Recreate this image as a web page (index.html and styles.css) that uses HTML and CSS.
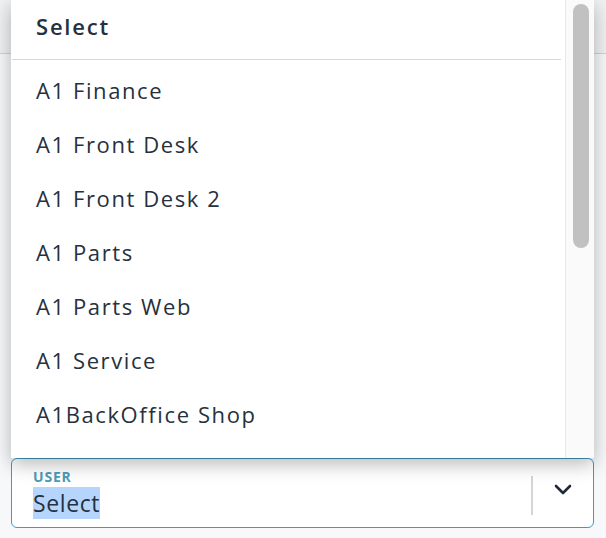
FILE: index.html
```html
<!DOCTYPE html>
<html lang="en">
<head>
  <meta charset="UTF-8" />
  <meta name="viewport" content="width=device-width, initial-scale=1" />
  <title>User Select</title>
  <link rel="stylesheet" href="styles.css">
</head>
<body>

  <div class="page">
    <div class="topbar"></div>

    <div class="field">
      <div class="field-text">
        <span class="field-label">USER</span>
        <span class="field-value"><span class="highlight">Select</span></span>
      </div>
      <div class="field-divider"></div>
      <div class="field-arrow">
        <svg width="18" height="12" viewBox="0 0 18 12">
          <path d="M2 3 L9 10 L16 3" fill="none" stroke="#1f2a36" stroke-width="2.6" stroke-linecap="round" stroke-linejoin="round"/>
        </svg>
      </div>
    </div>

    <div class="menu">
      <div class="menu-list">
        <div class="menu-header">Select</div>
        <div class="menu-items">
          <div class="menu-item">A1 Finance</div>
          <div class="menu-item">A1 Front Desk</div>
          <div class="menu-item">A1 Front Desk 2</div>
          <div class="menu-item">A1 Parts</div>
          <div class="menu-item">A1 Parts Web</div>
          <div class="menu-item">A1 Service</div>
          <div class="menu-item">A1BackOffice Shop</div>
        </div>
      </div>
      <div class="menu-scroll">
        <div class="menu-thumb"></div>
      </div>
    </div>
  </div>

</body>
</html>
```

FILE: styles.css
```css
* {
  margin: 0;
  padding: 0;
  box-sizing: border-box;
}

body {
  font-family: 'Open Sans', 'Lato', sans-serif;
  background: #f6f8fa;
  color: #26313d;
  height: 538px;
  overflow: hidden;
}

.page {
  position: relative;
  height: 538px;
}

.topbar {
  height: 54px;
  background: #f0f1f2;
  border-bottom: 1px solid #cfd2d5;
}

/* select field */
.field {
  margin: 404px 12px 0 11px;
  height: 70px;
  background: #fff;
  border: 1px solid #3f9cbf;
  border-radius: 6px;
  display: flex;
  align-items: center;
}

.field-text {
  flex: 1;
  display: flex;
  flex-direction: column;
  padding-left: 21px;
}

.field-label {
  font-size: 14px;
  font-weight: 700;
  color: #4b9bb7;
  letter-spacing: 0.8px;
  line-height: 14px;
}

.field-value {
  font-size: 23px;
  line-height: 28px;
  margin-top: 5px;
  letter-spacing: 0.6px;
}

.highlight {
  background: #b5d5fd;
}

.field-divider {
  width: 2px;
  height: 39px;
  background: #d3d5d7;
  margin-top: 4px;
}

.field-arrow {
  width: 60px;
  display: flex;
  justify-content: center;
  padding-bottom: 8px;
}

/* dropdown menu, sits over the page */
.menu {
  position: absolute;
  top: 0;
  left: 11px;
  width: 583px;
  height: 458px;
  background: #fff;
  display: flex;
  box-shadow: 0 6px 18px rgba(0, 0, 0, 0.28);
  overflow: hidden;
}

.menu-list {
  flex: 1;
  padding-left: 1px;
}

.menu-header {
  height: 60px;
  padding: 11px 0 0 24px;
  font-size: 22px;
  font-weight: 600;
  letter-spacing: 1.8px;
  border-bottom: 1px solid #d6d8da;
  margin-right: 4px;
}

.menu-items {
  padding-top: 3px;
}

.menu-item {
  height: 54px;
  line-height: 54px;
  padding-left: 24px;
  font-size: 22px;
  letter-spacing: 1.6px;
}

.menu-scroll {
  width: 29px;
  background: #fafafa;
  border-left: 1px solid #e8e8e8;
  padding: 4px 0 0 7px;
}

.menu-thumb {
  width: 16px;
  height: 244px;
  background: #c1c1c1;
  border-radius: 8px;
}
```
